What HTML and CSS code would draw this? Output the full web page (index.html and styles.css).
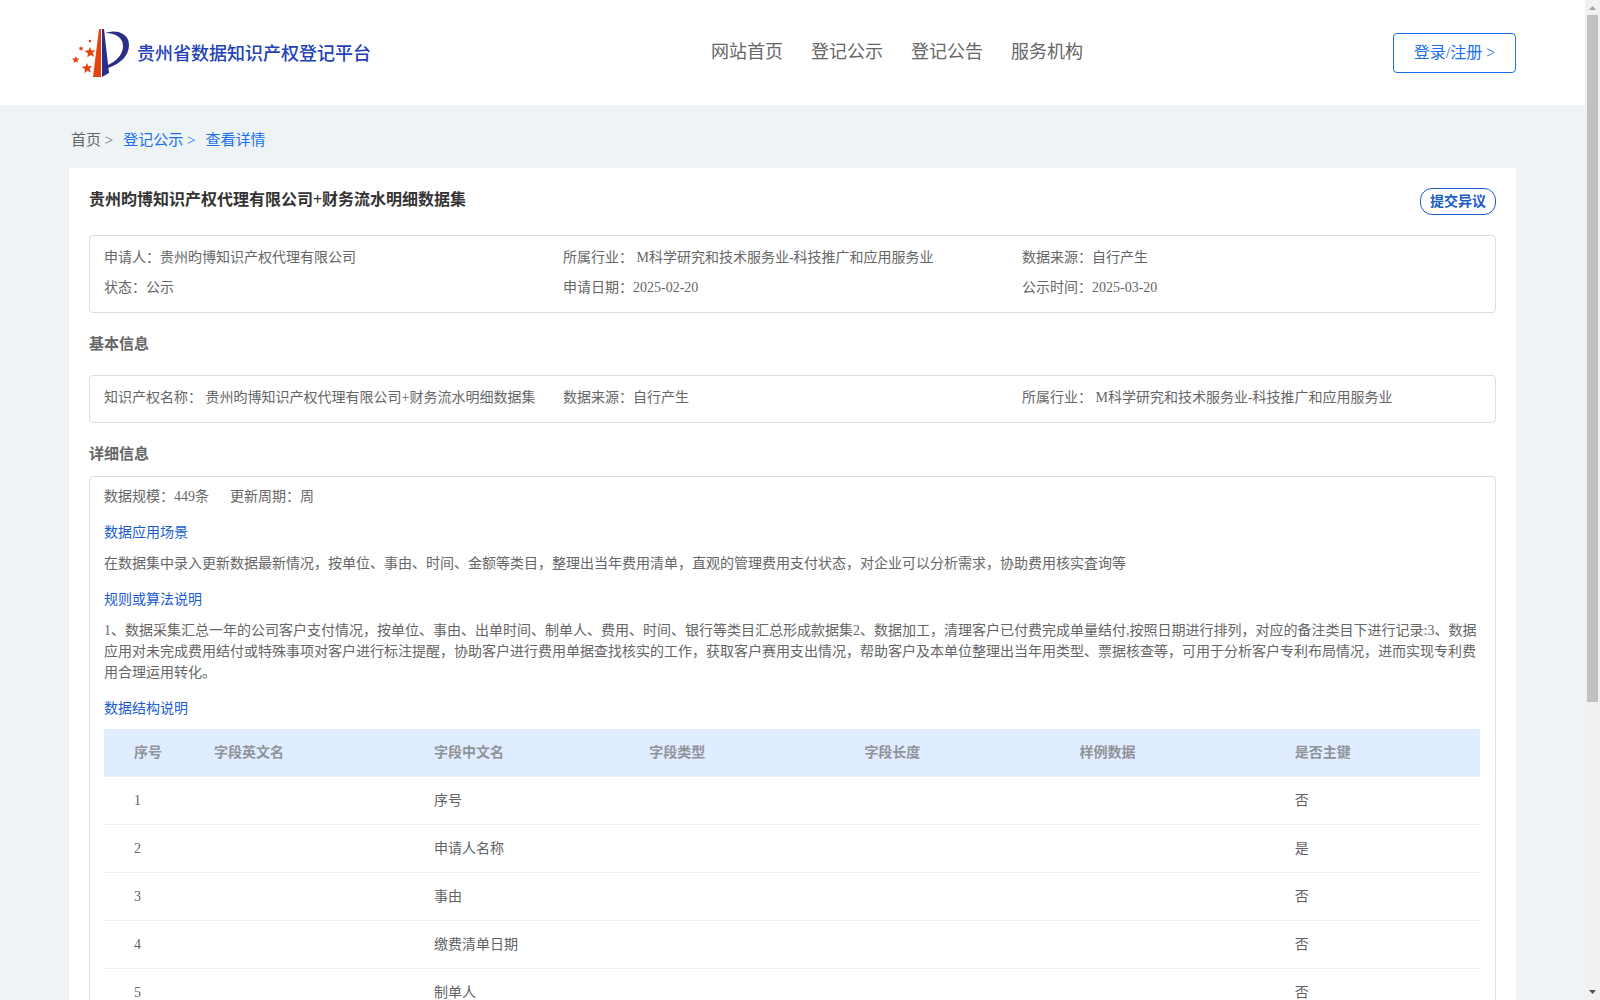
FILE: index.html
```html
<!DOCTYPE html>
<html lang="zh-CN">
<head>
<meta charset="utf-8">
<meta name="viewport" content="width=device-width, initial-scale=1">
<title>贵州省数据知识产权登记平台</title>
<link rel="stylesheet" href="styles.css">
</head>
<body>
<header class="header">
  <a class="brand" href="#">
    <svg class="brand-logo" viewBox="0 0 60 52" aria-hidden="true">
      <path fill="#e8430f" d="M28 1h2v48h-8z"/>
      <path fill="#2a2e86" d="M31 1h2l5 44-7 4z"/>
      <path fill="#2a2e86" d="M34 5C45 1 58 5 58 17c0 11-9 19-21 23v-3c9-4 15-11 15-19C52 9 44 5 34 5z"/>
      <g fill="#e8430f">
        <path d="M19 19l1.400 3.400 4.100-.2-2.900 2.700 1.700 3.900-3.700-1.800-3.300 2.500.6-4.200-3.500-2.300 4.100-.7z"/>
        <path d="M16 35l1.300 3.300 3.900-.2-2.700 2.700 1.600 3.700-3.600-1.700-3.200 2.400.6-4-3.300-2.200 3.900-.7z"/>
        <path d="M5 28l.8 2.400 2.700.2-2.100 1.700.6 2.700-2.200-1.400-2.300 1.500.6-2.700-2.100-1.800 2.700-.2z"/>
        <path d="M10 18l.7 1.600 1.900.1-1.400 1.200.4 1.900-1.600-1-1.600 1 .5-1.900-1.500-1.200 1.900-.1z"/>
        <circle cx="19" cy="13" r="1.300"/>
      </g>
    </svg>
    <span class="brand-name">贵州省数据知识产权登记平台</span>
  </a>
  <nav class="nav">
    <a href="#">网站首页</a>
    <a href="#">登记公示</a>
    <a href="#">登记公告</a>
    <a href="#">服务机构</a>
  </nav>
  <button class="login" type="button">登录/注册 &gt;</button>
</header>

<main class="main">
  <nav class="crumbs">
    <a class="crumb-home" href="#">首页 &gt;</a>
    <a href="#">登记公示 &gt;</a>
    <a href="#">查看详情</a>
  </nav>

  <article class="card">
    <div class="card-head">
      <h1 class="card-title">贵州昀博知识产权代理有限公司+财务流水明细数据集</h1>
      <button class="objection" type="button">提交异议</button>
    </div>

    <div class="box grid">
      <span>申请人：贵州昀博知识产权代理有限公司</span>
      <span>所属行业： M科学研究和技术服务业-科技推广和应用服务业</span>
      <span>数据来源：自行产生</span>
      <span>状态：公示</span>
      <span>申请日期：2025-02-20</span>
      <span>公示时间：2025-03-20</span>
    </div>

    <h2 class="section-title section-basic">基本信息</h2>
    <div class="box grid">
      <span>知识产权名称： 贵州昀博知识产权代理有限公司+财务流水明细数据集</span>
      <span>数据来源：自行产生</span>
      <span>所属行业： M科学研究和技术服务业-科技推广和应用服务业</span>
    </div>

    <h2 class="section-title section-detail">详细信息</h2>
    <div class="box details">
      <div class="scale"><span>数据规模：449条</span><span>更新周期：周</span></div>
      <h3 class="sub-title">数据应用场景</h3>
      <p class="text">在数据集中录入更新数据最新情况，按单位、事由、时间、金额等类目，整理出当年费用清单，直观的管理费用支付状态，对企业可以分析需求，协助费用核实査询等</p>
      <h3 class="sub-title">规则或算法说明</h3>
      <p class="text">1、数据采集汇总一年的公司客户支付情况，按单位、事由、出单时间、制单人、费用、时间、银行等类目汇总形成款据集2、数据加工，清理客户已付费完成单量结付,按照日期进行排列，对应的备注类目下进行记录:3、数据应用对未完成费用结付或特殊事项对客户进行标注提醒，协助客户进行费用单据查找核实的工作，获取客户赛用支出情况，帮助客户及本单位整理出当年用类型、票据核查等，可用于分析客户专利布局情况，进而实现专利费用合理运用转化。</p>
      <h3 class="sub-title">数据结构说明</h3>
      <table class="fields">
        <colgroup><col class="col-index"><col class="col-en"><col span="5"></colgroup>
        <thead>
          <tr><th>序号</th><th>字段英文名</th><th>字段中文名</th><th>字段类型</th><th>字段长度</th><th>样例数据</th><th>是否主键</th></tr>
        </thead>
        <tbody>
          <tr><td>1</td><td></td><td>序号</td><td></td><td></td><td></td><td>否</td></tr>
          <tr><td>2</td><td></td><td>申请人名称</td><td></td><td></td><td></td><td>是</td></tr>
          <tr><td>3</td><td></td><td>事由</td><td></td><td></td><td></td><td>否</td></tr>
          <tr><td>4</td><td></td><td>缴费清单日期</td><td></td><td></td><td></td><td>否</td></tr>
          <tr><td>5</td><td></td><td>制单人</td><td></td><td></td><td></td><td>否</td></tr>
        </tbody>
      </table>
    </div>
  </article>
</main>

<div class="scrollbar" aria-hidden="true">
  <svg class="arrow" viewBox="0 0 15 15"><path fill="#a3a3a3" d="M4 10h7L7.500 6z"/></svg>
  <div class="track"><div class="thumb"></div></div>
  <svg class="arrow" viewBox="0 0 15 15"><path fill="#505050" d="M4 5h7L7.500 9z"/></svg>
</div>
</body>
</html>
```
FILE: styles.css
```css
* { box-sizing: border-box; }

body {
  margin: 0;
  padding-right: 15px;
  background: #eef3f6;
  color: #666;
  font: 14px/21px "Liberation Serif", "Noto Sans CJK SC", serif;
  text-spacing-trim: space-all;
}

h1, h2, h3, p { margin: 0; }
a { color: inherit; text-decoration: none; }
button { font-family: inherit; background: #fff; cursor: pointer; padding: 0 0 3px; }

.header {
  display: grid;
  grid-template-columns: 43fr auto 29fr;
  align-items: center;
  height: 105px;
  padding: 0 69px;
  background: #fff;
}

.brand { display: flex; align-items: center; gap: 6px; padding-top: 2px; color: #2442b8; }
.brand-logo { width: 60px; height: 52px; margin-left: 2px; }
.brand-name { font-size: 18px; line-height: 24px; font-weight: 500; }

.nav { display: flex; gap: 28px; padding-bottom: 2px; font-size: 18px; line-height: 24px; }

.login {
  justify-self: end;
  width: 123px;
  height: 40px;
  border: 1px solid #1a6fee;
  border-radius: 4px;
  color: #1a6fee;
  font-size: 16px;
}

.main { padding: 0 69px; }

.crumbs {
  display: flex;
  gap: 10px;
  height: 63px;
  padding: 24px 2px 0;
  color: #1a6fee;
  font-size: 15px;
  line-height: 22px;
}
.crumb-home { color: #666; }

.card { padding: 20px; background: #fff; }

.card-head { display: flex; justify-content: space-between; height: 47px; }
.card-title { color: #333; font-size: 16px; line-height: 24px; font-weight: 700; }

.objection {
  width: 76px;
  height: 27px;
  border: 1px solid #1a5cc8;
  border-radius: 12px;
  color: #1a5cc8;
  font-size: 14px;
  font-weight: 700;
}

.box { border: 1px solid #ddd; border-radius: 4px; padding: 7px 14px 9px; }

.grid {
  display: grid;
  grid-template-columns: repeat(3, 1fr);
  line-height: 30px;
  white-space: nowrap;
}

.section-title { font-size: 15px; line-height: 22px; font-weight: 700; }
.section-basic { margin: 20px 0; }
.section-detail { margin: 20px 0 11px; }

.details { padding: 9px 15px 10px 14px; }
.scale { display: flex; gap: 21px; }
.sub-title {
  margin: 15px 0 10px;
  color: #1a5cd0;
  font-size: 14px;
  line-height: 21px;
  font-weight: 400;
}

.fields {
  width: 100%;
  border-collapse: separate;
  border-spacing: 0;
  table-layout: fixed;
  color: #606266;
}
.col-index { width: 80px; }
.col-en { width: 220px; }
.fields th,
.fields td {
  height: 48px;
  padding: 0 30px;
  border-bottom: 1px solid #ebeef5;
  text-align: left;
  white-space: nowrap;
}
.fields td:first-child,
.fields th:first-child { padding-right: 0; }
.fields th { background: #e0ecff; color: #909399; font-weight: 700; }

/* Window scrollbar stays over the page edge */
.scrollbar {
  position: fixed;
  top: 0;
  right: 0;
  bottom: 0;
  display: flex;
  flex-direction: column;
  width: 15px;
  background: #f1f1f1;
}
.arrow { width: 15px; height: 15px; }
.track { flex: 1; padding: 0 2px; }
.thumb { height: 70.8%; background: #c1c1c1; }
```
